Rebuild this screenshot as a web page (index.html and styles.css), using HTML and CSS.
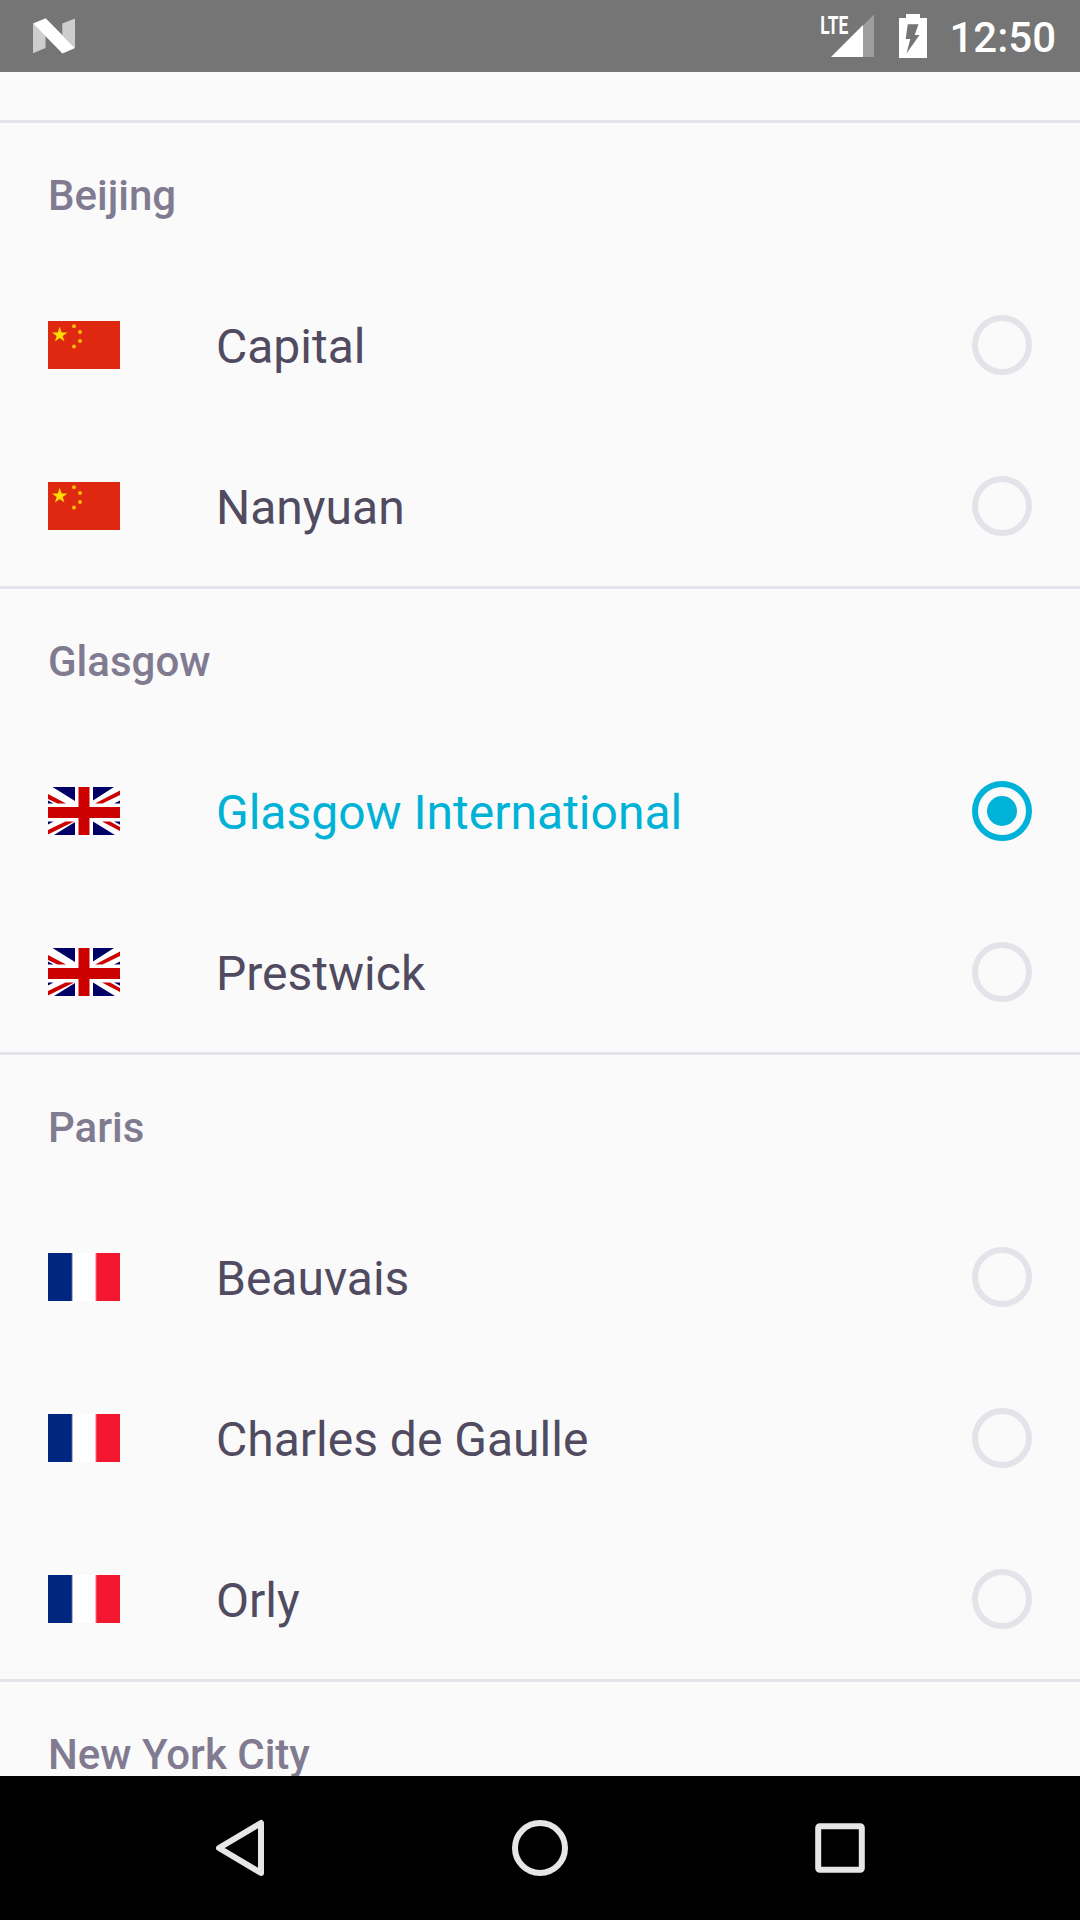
FILE: index.html
```html
<!DOCTYPE html>
<html lang="en">
<head>
<meta charset="utf-8">
<title>Airports</title>
<link rel="stylesheet" href="styles.css">
</head>
<body>
<svg class="defs" width="0" height="0" aria-hidden="true">
  <defs>
    <symbol id="cn" viewBox="0 0 72 48">
      <path fill="#de2910" d="M0 0h72v48H0z"/>
      <path fill="#ffde00" d="M11.700 5.800l1.900 5.600h5.800l-4.700 3.500 1.800 5.700-4.800-3.500-4.800 3.500 1.800-5.700-4.700-3.500h5.800z"/>
      <g fill="#fdb906"><circle cx="26" cy="5.200" r="2"/><circle cx="32" cy="11" r="2"/><circle cx="32" cy="20" r="2"/><circle cx="26" cy="25.600" r="2"/></g>
    </symbol>
    <symbol id="gb" viewBox="0 0 72 48">
      <path fill="#fff" d="M0 0h72v48H0z"/>
      <path fill="#006" d="M4.500 0H27v14zM45 0h21L45 13.500zM27 48H6l21-13zM45 48h22L45 34.500zM0 13.500v3h5.500zM72 13.500v3h-6zM0 34.500h5.500L0 37.500zM72 34.500h-6l6 3.300z"/>
      <path fill="#c00" d="M0 7v5l9.500 4.500h8.500zM47 16.500h7.500L72 8V3.500zM54 34.500h8l10 5.500v4zM0 47.500V43l17.500-8.500h8.500z"/>
      <path fill="#c00" d="M30.500 0h11v20H72v11H41.500v17h-11V31H0V20h30.500z"/>
    </symbol>
    <symbol id="fr" viewBox="0 0 72 48">
      <path fill="#fff" d="M0 0h72v48H0z"/>
      <path fill="#00267f" d="M0 0h23v48H0z"/>
      <path fill="#23428f" d="M23 0h1v48h-1z"/>
      <path fill="#aab6d6" d="M24 0h1v48h-1z"/>
      <path fill="#fbb5be" d="M47 0h1v48h-1z"/>
      <path fill="#f5455b" d="M48 0h1v48h-1z"/>
      <path fill="#f31830" d="M49 0h23v48H49z"/>
    </symbol>
  </defs>
</svg>

<div class="screen">
  <header class="status">
    <svg class="logo" width="44" height="72" viewBox="32 0 44 72">
      <path fill="#cdcdcd" d="M33 23.500L45.500 36v12L33 53.300zM62.300 23.500L75 18.500V48L62.300 35z"/>
      <path fill="#fff" d="M33 23.500l12.700-5.200L75 48l-12.500 5.400z"/>
    </svg>
    <div class="indicators">
      <svg width="108" height="72" viewBox="820 0 108 72">
        <text class="lte" x="820.300" y="33.500" textLength="28" lengthAdjust="spacingAndGlyphs">LTE</text>
        <path fill="#9e9e9e" d="M863 57V25.500L874 14.500V57z"/>
        <path fill="#fff" d="M831 57L863 25v32z"/>
        <path fill="#fff" fill-rule="evenodd" d="M906 14h14v4h7v40h-28V18h7zM907.700 24.300L905.700 39h4.600L906.500 53.500L919.500 35h-4.800L918.500 24.300z"/>
      </svg>
      <span class="clock">12:50</span>
    </div>
  </header>

  <main class="list">
    <section class="group">
      <h2>Beijing</h2>
      <ul>
        <li><svg class="flag"><use href="#cn"/></svg><span class="name">Capital</span><i class="radio"></i></li>
        <li><svg class="flag"><use href="#cn"/></svg><span class="name">Nanyuan</span><i class="radio"></i></li>
      </ul>
    </section>
    <section class="group">
      <h2>Glasgow</h2>
      <ul>
        <li class="selected"><svg class="flag"><use href="#gb"/></svg><span class="name">Glasgow International</span><i class="radio"></i></li>
        <li><svg class="flag"><use href="#gb"/></svg><span class="name">Prestwick</span><i class="radio"></i></li>
      </ul>
    </section>
    <section class="group">
      <h2>Paris</h2>
      <ul>
        <li><svg class="flag"><use href="#fr"/></svg><span class="name">Beauvais</span><i class="radio"></i></li>
        <li><svg class="flag"><use href="#fr"/></svg><span class="name">Charles de Gaulle</span><i class="radio"></i></li>
        <li><svg class="flag"><use href="#fr"/></svg><span class="name">Orly</span><i class="radio"></i></li>
      </ul>
    </section>
    <section class="group">
      <h2>New York City</h2>
    </section>
  </main>

  <nav class="navbar">
    <svg width="60" height="60" viewBox="210 1818 60 60"><path d="M261 1823v50l-42-25z"/></svg>
    <svg width="60" height="60" viewBox="510 1818 60 60"><circle cx="540" cy="1848" r="25"/></svg>
    <svg width="60" height="60" viewBox="810 1818 60 60"><rect x="818.200" y="1826.200" width="43.600" height="43.600" rx="1.500"/></svg>
  </nav>
</div>
</body>
</html>
```
FILE: styles.css
```css
* { box-sizing: border-box; }

body {
  margin: 0;
  font-family: Roboto, sans-serif;
  background: #fafafa;
}

.defs { position: absolute; }

.screen {
  display: flex;
  flex-direction: column;
  height: 1920px;
  width: 1080px;
  overflow: hidden;
}

.status {
  flex: none;
  display: flex;
  justify-content: space-between;
  height: 72px;
  padding: 0 24px 0 32px;
  background: #757575;
  color: #fff;
}

.status svg { display: block; }

.indicators { display: flex; gap: 21px; }

.lte {
  font-size: 26.5px;
  font-weight: 700;
  fill: #fff;
}

.clock {
  font-size: 42px;
  font-weight: 500;
  line-height: 76px;
}

.list {
  flex: 1;
  min-height: 0;
  padding-top: 48px;
  overflow: hidden;
}

.group { border-top: 3px solid #e4e3e9; }

.group h2 {
  height: 141px;
  margin: 0;
  padding: 2px 48px 0;
  font-size: 42px;
  font-weight: 500;
  line-height: 141px;
  color: #817b91;
}

.group ul {
  margin: 0;
  padding: 0;
  list-style: none;
}

.group li {
  display: flex;
  align-items: center;
  height: 161px;
  padding: 1px 48px 0;
  color: #504b60;
}

.flag {
  flex: none;
  width: 72px;
  height: 48px;
  margin-right: 96px;
}

.name {
  flex: 1;
  padding-top: 4px;
  font-size: 48px;
  line-height: 56px;
}

.radio {
  display: flex;
  align-items: center;
  justify-content: center;
  width: 60px;
  height: 60px;
  border: 6px solid #e4e3ea;
  border-radius: 50%;
}

.group .selected { color: #00b2d6; }

.selected .radio { border-color: #00b2d8; }

.selected .radio::before {
  content: "";
  width: 30px;
  height: 30px;
  border-radius: 50%;
  background: #00b2d8;
}

.navbar {
  flex: none;
  display: flex;
  align-items: center;
  justify-content: space-between;
  height: 144px;
  padding: 0 210px;
  background: #000;
}

.navbar svg {
  fill: none;
  stroke: #e6e6e6;
  stroke-width: 6;
  stroke-linejoin: round;
}
```
